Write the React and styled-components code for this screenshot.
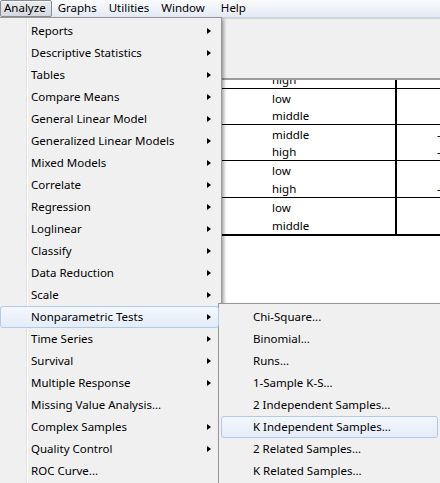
import React from "react";
import styled, { createGlobalStyle, css } from "styled-components";

const GlobalStyle = createGlobalStyle`
  html, body { margin: 0; padding: 0; background: #fff; overflow: hidden; }
  body { font-family: "Noto Sans", "Open Sans", sans-serif; font-size: 11.5px; color: #000; }
`;

const Page = styled.div`
  position: relative;
  width: 440px;
  height: 483px;
  overflow: hidden;
  background: #fff;
`;

const MenuBar = styled.div`
  display: flex;
  align-items: stretch;
  height: 17px;
  background: linear-gradient(#fbfcfe, #e3e9f3);
  border-bottom: 1px solid #c9d4e2;
`;

const BarItem = styled.div`
  display: flex;
  align-items: center;
  padding: 0 5px 2px 3px;
  margin-right: ${(p) => p.$gap}px;
  border: 1px solid transparent;
  border-radius: 2px;
  ${(p) =>
    p.$active &&
    css`
      border-color: #8a8d92;
      background: linear-gradient(#e9ebee, #d5d9df);
      box-shadow: inset 0 1px 0 rgba(255, 255, 255, 0.6);
    `}
`;

const Toolbar = styled.div`
  height: 59px;
  background: #f0f0f0;
  border-top: 1px solid #d5d5d5;
  border-bottom: 2px solid #9c9c9c;
`;

const TableClip = styled.div`
  height: 160px;
  overflow: hidden;
  background: #fff;
`;

const TableBody = styled.div`
  margin-top: -28px;
`;

const Group = styled.div`
  display: grid;
  grid-template-columns: 395px 2px 1fr;
  border-bottom: ${(p) => (p.$last ? "2px" : "1px")} solid #000;
`;

const LabelCell = styled.div`
  display: flex;
  flex-direction: column;
`;

const Rule = styled.div`
  background: #000;
`;

const ValueCell = styled.div`
  display: flex;
  flex-direction: column;
  overflow: hidden;
`;

const Cell = styled.div`
  height: ${(p) => p.$h}px;
  display: flex;
  align-items: center;
  padding-left: ${(p) => p.$pad}px;
  white-space: nowrap;
`;

const Menu = styled.div`
  position: absolute;
  left: ${(p) => p.$left}px;
  top: ${(p) => p.$top}px;
  width: ${(p) => p.$width}px;
  padding: 2px;
  background: #f0f0f0;
  border: 1px solid #979797;
  box-shadow: 2px 2px 3px rgba(0, 0, 0, 0.35);
  ${(p) =>
    p.$gutter &&
    css`
      &::before {
        content: "";
        position: absolute;
        top: 0;
        bottom: 0;
        left: ${p.$gutter}px;
        width: 1px;
        background: #e2e3e3;
        box-shadow: 1px 0 0 #fff;
      }
    `}
`;

const Item = styled.div`
  position: relative;
  display: flex;
  align-items: center;
  height: 22px;
  padding-left: ${(p) => p.$pad}px;
  padding-right: 7px;
  padding-bottom: 2px;
  box-sizing: border-box;
  border: 1px solid transparent;
  border-radius: 3px;
  white-space: nowrap;
  ${(p) =>
    p.$hot &&
    css`
      border-color: #aecbee;
      background: linear-gradient(#f4f7fc, #e4ecf8);
      z-index: 1;
    `}
`;

const Label = styled.span`
  flex: 1;
  margin-left: -1px;
`;

const Arrow = styled.span`
  width: 0;
  height: 0;
  margin-top: 2px;
  border-left: 4px solid #000;
  border-top: 3.5px solid transparent;
  border-bottom: 3.5px solid transparent;
`;

const mainItems = [
  ["Reports", true],
  ["Descriptive Statistics", true],
  ["Tables", true],
  ["Compare Means", true],
  ["General Linear Model", true],
  ["Generalized Linear Models", true],
  ["Mixed Models", true],
  ["Correlate", true],
  ["Regression", true],
  ["Loglinear", true],
  ["Classify", true],
  ["Data Reduction", true],
  ["Scale", true],
  ["Nonparametric Tests", true, true],
  ["Time Series", true],
  ["Survival", true],
  ["Multiple Response", true],
  ["Missing Value Analysis...", false],
  ["Complex Samples", true],
  ["Quality Control", true],
  ["ROC Curve...", false],
];

const subItems = [
  "Chi-Square...",
  "Binomial...",
  "Runs...",
  "1-Sample K-S...",
  "2 Independent Samples...",
  "K Independent Samples...",
  "2 Related Samples...",
  "K Related Samples...",
];

const bar = [
  ["Analyze", 2],
  ["Graphs", 2],
  ["Utilities", 2],
  ["Window", 6],
  ["Help", 0],
];

const groups = [
  { h: [18, 18], rows: [["", ""], ["high", ""]] },
  { h: [18, 17], rows: [["low", ""], ["middle", ""]] },
  { h: [18, 17], rows: [["middle", "-.167"], ["high", "-.250"]] },
  { h: [18, 18], rows: [["low", ""], ["high", "-.083"]] },
  { h: [18, 18], rows: [["low", ""], ["middle", ""]] },
];

export default function App() {
  return (
    <Page>
      <GlobalStyle />
      <MenuBar>
        {bar.map(([label, gap], i) => (
          <BarItem key={label} $active={i === 0} $gap={gap}>
            {label}
          </BarItem>
        ))}
      </MenuBar>
      <Toolbar />
      <TableClip>
        <TableBody>
          {groups.map((g, gi) => (
            <Group key={gi} $last={gi === groups.length - 1}>
              <LabelCell>
                {g.rows.map((r, ri) => (
                  <Cell key={ri} $h={g.h[ri]} $pad={272}>
                    {r[0]}
                  </Cell>
                ))}
              </LabelCell>
              <Rule />
              <ValueCell>
                {g.rows.map((r, ri) => (
                  <Cell key={ri} $h={g.h[ri]} $pad={40}>
                    {r[1]}
                  </Cell>
                ))}
              </ValueCell>
            </Group>
          ))}
        </TableBody>
      </TableClip>

      <Menu $left={-3} $top={17} $width={219} $gutter={28}>
        {mainItems.map(([label, sub, hot]) => (
          <Item key={label} $pad={31} $hot={hot}>
            <Label>{label}</Label>
            {sub && <Arrow />}
          </Item>
        ))}
      </Menu>

      <Menu $left={218} $top={303} $width={217}>
        {subItems.map((label) => (
          <Item key={label} $pad={32} $hot={label === "K Independent Samples..."}>
            <Label>{label}</Label>
          </Item>
        ))}
      </Menu>
    </Page>
  );
}
